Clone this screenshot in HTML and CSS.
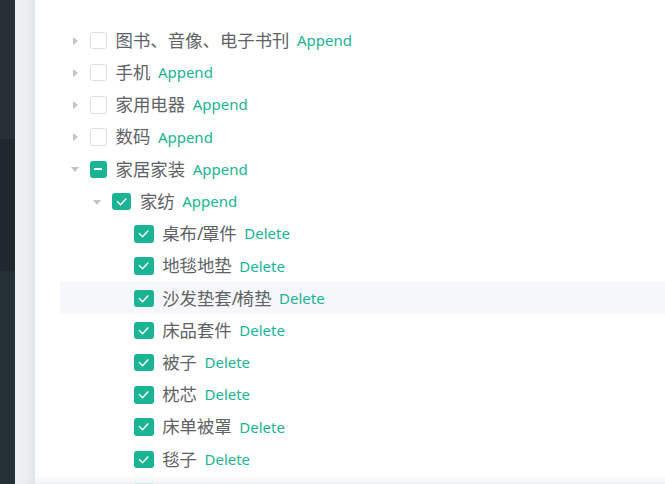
FILE: index.html
```html
<!DOCTYPE html>
<html lang="zh">
<head>
<meta charset="utf-8">
<title>Tree</title>
<link rel="stylesheet" href="styles.css">
</head>
<body>
<div class="page">
  <div class="sidebar"></div>
  <div class="gutter"></div>
  <div class="panel">
    <div class="tree">
      <div class="node lv0"><span class="caret right"></span><span class="cb"></span><span class="label">图书、音像、电子书刊</span><span class="act">Append</span></div>
      <div class="node lv0"><span class="caret right"></span><span class="cb"></span><span class="label">手机</span><span class="act">Append</span></div>
      <div class="node lv0"><span class="caret right"></span><span class="cb"></span><span class="label">家用电器</span><span class="act">Append</span></div>
      <div class="node lv0"><span class="caret right"></span><span class="cb"></span><span class="label">数码</span><span class="act">Append</span></div>
      <div class="node lv0"><span class="caret down"></span><span class="cb ind"><span class="bar"></span></span><span class="label">家居家装</span><span class="act">Append</span></div>
      <div class="node lv1"><span class="caret down"></span><span class="cb on"><svg viewBox="0 0 17 17"><polyline points="4.5,8.6 7.4,11.4 12.5,5.8"/></svg></span><span class="label">家纺</span><span class="act">Append</span></div>
      <div class="node lv2"><span class="caret leaf"></span><span class="cb on"><svg viewBox="0 0 17 17"><polyline points="4.5,8.6 7.4,11.4 12.5,5.8"/></svg></span><span class="label">桌布<span class="sl">/</span>罩件</span><span class="act">Delete</span></div>
      <div class="node lv2"><span class="caret leaf"></span><span class="cb on"><svg viewBox="0 0 17 17"><polyline points="4.5,8.6 7.4,11.4 12.5,5.8"/></svg></span><span class="label">地毯地垫</span><span class="act">Delete</span></div>
      <div class="node lv2 hover"><span class="caret leaf"></span><span class="cb on"><svg viewBox="0 0 17 17"><polyline points="4.5,8.6 7.4,11.4 12.5,5.8"/></svg></span><span class="label">沙发垫套<span class="sl">/</span>椅垫</span><span class="act">Delete</span></div>
      <div class="node lv2"><span class="caret leaf"></span><span class="cb on"><svg viewBox="0 0 17 17"><polyline points="4.5,8.6 7.4,11.4 12.5,5.8"/></svg></span><span class="label">床品套件</span><span class="act">Delete</span></div>
      <div class="node lv2"><span class="caret leaf"></span><span class="cb on"><svg viewBox="0 0 17 17"><polyline points="4.5,8.6 7.4,11.4 12.5,5.8"/></svg></span><span class="label">被子</span><span class="act">Delete</span></div>
      <div class="node lv2"><span class="caret leaf"></span><span class="cb on"><svg viewBox="0 0 17 17"><polyline points="4.5,8.6 7.4,11.4 12.5,5.8"/></svg></span><span class="label">枕芯</span><span class="act">Delete</span></div>
      <div class="node lv2"><span class="caret leaf"></span><span class="cb on"><svg viewBox="0 0 17 17"><polyline points="4.5,8.6 7.4,11.4 12.5,5.8"/></svg></span><span class="label">床单被罩</span><span class="act">Delete</span></div>
      <div class="node lv2"><span class="caret leaf"></span><span class="cb on"><svg viewBox="0 0 17 17"><polyline points="4.5,8.6 7.4,11.4 12.5,5.8"/></svg></span><span class="label">毯子</span><span class="act">Delete</span></div>
      <div class="node lv2"><span class="caret leaf"></span><span class="cb on"><svg viewBox="0 0 17 17"><polyline points="4.5,8.6 7.4,11.4 12.5,5.8"/></svg></span></div>
    </div>
    <div class="fade"></div>
  </div>
</div>
</body>
</html>
```

FILE: styles.css
```css
html, body {
  margin: 0;
  padding: 0;
  height: 100%;
  overflow: hidden;
  background: #ffffff;
}

.page {
  display: flex;
  height: 484px;
  width: 665px;
  overflow: hidden;
}

.sidebar {
  flex: 0 0 15px;
  background: linear-gradient(to bottom, #263036 0, #263036 139px, #1f282d 139px, #1f282d 271px, #253036 271px, #253036 100%);
}

.gutter {
  flex: 0 0 20px;
  background: linear-gradient(to right, #eef1f2 0, #ebeef0 12px, #e2e6e8 19px, #dde1e3 20px);
}

.panel {
  position: relative;
  flex: 1 1 auto;
  background: #ffffff;
  border-top-left-radius: 3px;
  padding: 24.4px 0 0 25px;
  overflow: hidden;
  font-family: "Noto Sans", "Noto Sans CJK SC", sans-serif;
}

.fade {
  position: absolute;
  left: 0;
  right: 0;
  bottom: 0;
  height: 8px;
  background: linear-gradient(to bottom, rgba(240, 242, 244, 0), rgba(236, 239, 241, 0.9));
}

.tree {
  display: flex;
  flex-direction: column;
}

.node {
  display: flex;
  align-items: center;
  height: 32.23px;
  white-space: nowrap;
}

.node.hover {
  background: #f5f7fa;
}

.lv0 { padding-left: 0; }
.lv1 { padding-left: 22.3px; }
.lv2 { padding-left: 44.6px; }

.caret {
  flex: 0 0 29.6px;
  height: 29.6px;
  display: flex;
  align-items: center;
  justify-content: center;
}

.caret.right::before {
  content: "";
  display: block;
  width: 0;
  height: 0;
  border-left: 5px solid #c0c4cc;
  border-top: 4px solid transparent;
  border-bottom: 4px solid transparent;
  margin-left: 1px;
}

.caret.down::before {
  content: "";
  display: block;
  width: 0;
  height: 0;
  border-top: 5px solid #c0c4cc;
  border-left: 4px solid transparent;
  border-right: 4px solid transparent;
  margin-top: 1px;
}

.cb {
  flex: 0 0 17.4px;
  height: 17.4px;
  box-sizing: border-box;
  border: 1px solid #dcdfe6;
  border-radius: 2.5px;
  background: #ffffff;
  margin-right: 8.6px;
  display: flex;
  align-items: center;
  justify-content: center;
}

.cb.on, .cb.ind {
  background: #1ab394;
  border-color: #1ab394;
}

.cb svg {
  width: 17.4px;
  height: 17.4px;
  flex: 0 0 auto;
}

.cb svg polyline {
  fill: none;
  stroke: #ffffff;
  stroke-width: 1.4;
  stroke-linecap: square;
}

.cb .bar {
  display: block;
  width: 8px;
  height: 2px;
  background: #ffffff;
}

.label {
  font-size: 17.4px;
  color: #606266;
  line-height: 1;
}

.label .sl {
  letter-spacing: -1.5px;
}

.act {
  margin-left: 7.5px;
  font-size: 15px;
  color: #1ab394;
  line-height: 1;
}
```
